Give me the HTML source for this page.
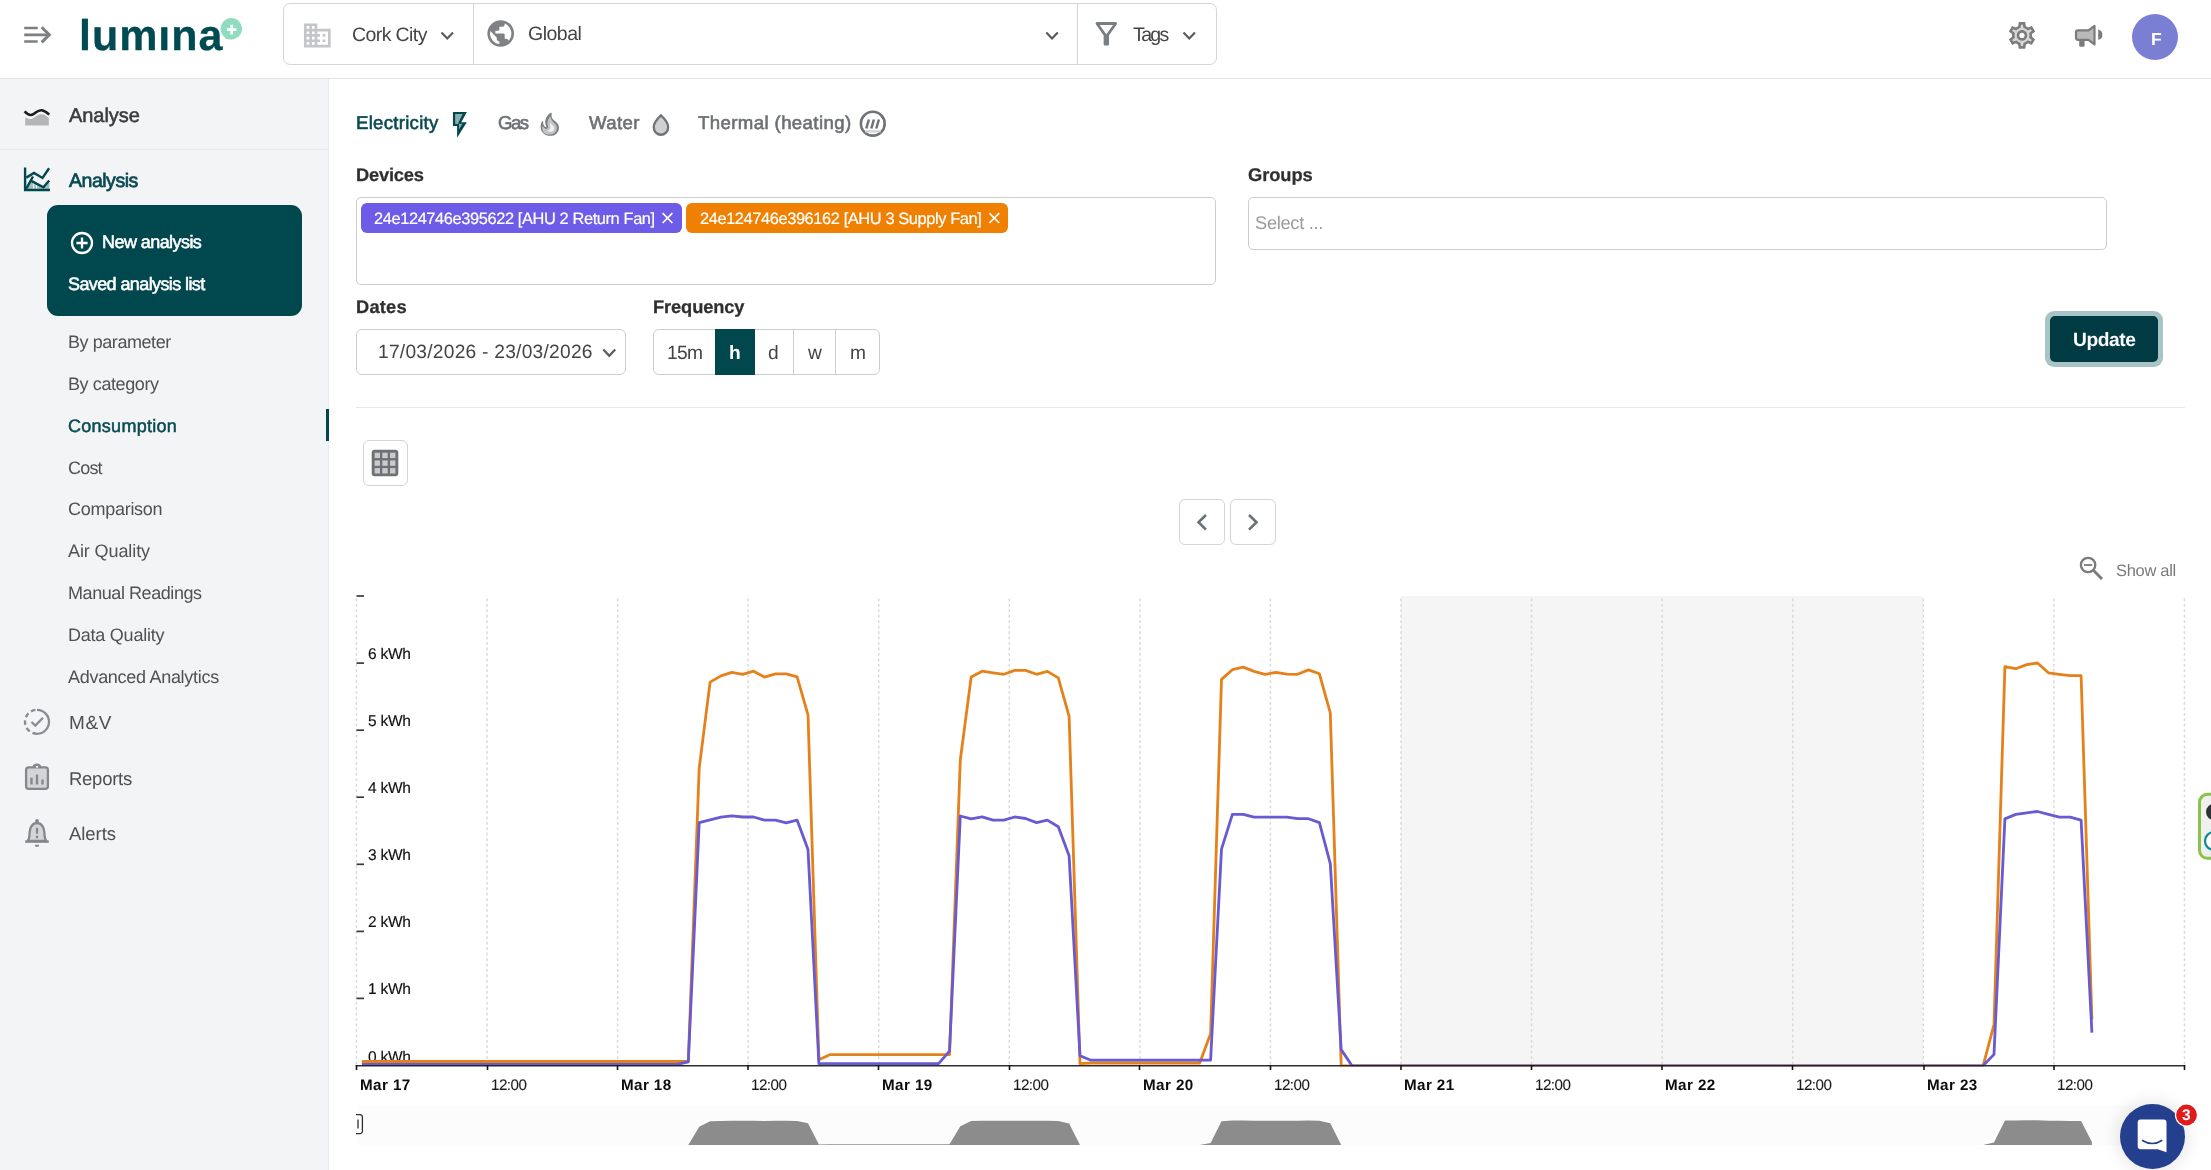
<!DOCTYPE html>
<html lang="en"><head><meta charset="utf-8"><title>lumina - Consumption analysis</title>
<style>
*{box-sizing:border-box;margin:0;padding:0}
html,body{width:2211px;height:1170px;overflow:hidden;background:#fff}
body{position:relative;font-family:"Liberation Sans",Arial,sans-serif;color:#444}
.t{position:absolute;white-space:nowrap;line-height:1;display:block;will-change:transform;text-rendering:geometricPrecision}
.abs{position:absolute}
svg{overflow:visible}
#ov{position:absolute;left:0;top:0;pointer-events:none}
</style></head>
<body>
<div class="hdr" style="position:absolute;left:0px;top:0px;width:2211px;height:79px;background:#fff;border-bottom:1px solid #e3e3e3"></div>
<div style="position:absolute;left:283px;top:3px;width:934px;height:62px;border:1px solid #d5d5d5;border-radius:7px;background:#fff"></div>
<div style="position:absolute;left:473px;top:4px;width:1px;height:60px;background:#d5d5d5"></div>
<div style="position:absolute;left:1077px;top:4px;width:1px;height:60px;background:#d5d5d5"></div>
<div style="position:absolute;left:2132px;top:14px;width:46px;height:46px;border-radius:50%;background:#7b7fd3"></div>
<div style="position:absolute;left:0px;top:79px;width:329px;height:1091px;background:#f3f4f6;border-right:1px solid #e9eaec"></div>
<div style="position:absolute;left:0px;top:149px;width:328px;height:1px;background:#e9eaec"></div>
<div style="position:absolute;left:47px;top:205px;width:255px;height:111px;background:#00474e;border-radius:11px"></div>
<div style="position:absolute;left:326px;top:409px;width:3px;height:32px;background:#00474e"></div>
<div style="position:absolute;left:356px;top:197px;width:860px;height:88px;border:1px solid #cdcdcd;border-radius:5px;background:#fff"></div>
<div style="position:absolute;left:361px;top:203px;width:321px;height:30px;background:#6c5ce7;border-radius:6px"></div>
<div style="position:absolute;left:686px;top:203px;width:322px;height:30px;background:#f08002;border-radius:6px"></div>
<div style="position:absolute;left:1248px;top:197px;width:859px;height:53px;border:1px solid #cdcdcd;border-radius:5px;background:#fff"></div>
<div style="position:absolute;left:356px;top:329px;width:270px;height:46px;border:1px solid #cdcdcd;border-radius:6px;background:#fff"></div>
<div style="position:absolute;left:653px;top:329px;width:227px;height:46px;border:1px solid #cdcdcd;border-radius:6px;background:#fff"></div>
<div style="position:absolute;left:715px;top:329px;width:40px;height:46px;background:#00474e"></div>
<div style="position:absolute;left:793px;top:330px;width:1px;height:44px;background:#cdcdcd"></div>
<div style="position:absolute;left:835px;top:330px;width:1px;height:44px;background:#cdcdcd"></div>
<div style="position:absolute;left:2045px;top:311px;width:118px;height:56px;background:#a8c4c5;border-radius:9px"></div>
<div style="position:absolute;left:2050px;top:316px;width:108px;height:46px;background:#003a42;border-radius:5px"></div>
<div style="position:absolute;left:356px;top:407px;width:1829px;height:1px;background:#e8e8e8"></div>
<div style="position:absolute;left:363px;top:440px;width:45px;height:46px;border:1px solid #d4d4d4;border-radius:6px;background:#fff"></div>
<div style="position:absolute;left:1179px;top:499px;width:46px;height:46px;border:1px solid #d4d4d4;border-radius:6px;background:#fff"></div>
<div style="position:absolute;left:1230px;top:499px;width:46px;height:46px;border:1px solid #d4d4d4;border-radius:6px;background:#fff"></div>
<div style="position:absolute;left:1401.3px;top:596px;width:522.2px;height:469px;background:#f5f5f5"></div>
<div style="position:absolute;left:357px;top:1104.5px;width:1827px;height:40.5px;background:#fcfcfc"></div>
<div style="position:absolute;left:2120px;top:1104px;width:65px;height:65px;border-radius:50%;background:#243f8d;box-shadow:0 0 14px 6px rgba(0,0,0,.07)"></div>
<span class="t logo" style="left:79.3px;top:15px;font-size:43px;color:#004a51;letter-spacing:0.962px;font-weight:700;-webkit-text-stroke:0.3px #004a51;">lumina</span>
<span class="t" style="left:351.6px;top:26px;font-size:19.5px;color:#444;letter-spacing:-0.593px;">Cork City</span>
<span class="t" style="left:528px;top:25px;font-size:19.5px;color:#444;letter-spacing:-0.497px;">Global</span>
<span class="t" style="left:1133px;top:26px;font-size:19.5px;color:#444;letter-spacing:-1.621px;">Tags</span>
<span class="t" style="left:2151.2px;top:31px;font-size:17.5px;color:#fff;font-weight:700;">F</span>
<span class="t" style="left:69px;top:106px;font-size:20px;color:#3b3b3b;letter-spacing:-0.05px;-webkit-text-stroke:0.55px #3b3b3b;">Analyse</span>
<span class="t" style="left:68.6px;top:172px;font-size:19.5px;color:#0a4a52;letter-spacing:-0.479px;-webkit-text-stroke:0.7px #0a4a52;">Analysis</span>
<span class="t" style="left:101.6px;top:233px;font-size:18px;color:#fff;letter-spacing:-0.563px;-webkit-text-stroke:0.55px #fff;">New analysis</span>
<span class="t" style="left:68.3px;top:275px;font-size:18px;color:#fff;letter-spacing:-0.603px;-webkit-text-stroke:0.55px #fff;">Saved analysis list</span>
<span class="t" style="left:68px;top:333px;font-size:18px;color:#515151;letter-spacing:-0.438px;">By parameter</span>
<span class="t" style="left:68px;top:375px;font-size:18px;color:#515151;letter-spacing:-0.404px;">By category</span>
<span class="t" style="left:67.8px;top:417px;font-size:18px;color:#0a4a52;letter-spacing:0.276px;-webkit-text-stroke:0.5px #0a4a52;">Consumption</span>
<span class="t" style="left:68px;top:459px;font-size:18px;color:#515151;letter-spacing:-0.8px;">Cost</span>
<span class="t" style="left:68px;top:500px;font-size:18px;color:#515151;letter-spacing:-0.271px;">Comparison</span>
<span class="t" style="left:68px;top:542px;font-size:18px;color:#515151;letter-spacing:-0.098px;">Air Quality</span>
<span class="t" style="left:68px;top:584px;font-size:18px;color:#515151;letter-spacing:-0.429px;">Manual Readings</span>
<span class="t" style="left:68px;top:626px;font-size:18px;color:#515151;letter-spacing:-0.235px;">Data Quality</span>
<span class="t" style="left:68px;top:668px;font-size:18px;color:#515151;letter-spacing:-0.29px;">Advanced Analytics</span>
<span class="t" style="left:69px;top:714px;font-size:19px;color:#4f4f4f;letter-spacing:0.683px;">M&amp;V</span>
<span class="t" style="left:69px;top:770px;font-size:18.5px;color:#4f4f4f;letter-spacing:-0.267px;">Reports</span>
<span class="t" style="left:69px;top:825px;font-size:18.5px;color:#4f4f4f;letter-spacing:-0.044px;">Alerts</span>
<span class="t" style="left:355.6px;top:114px;font-size:18.6px;color:#0a4a52;letter-spacing:0.279px;-webkit-text-stroke:0.6px #0a4a52;">Electricity</span>
<span class="t" style="left:498.3px;top:114px;font-size:18.6px;color:#6c7075;letter-spacing:-1.54px;-webkit-text-stroke:0.6px #6c7075;">Gas</span>
<span class="t" style="left:588.8px;top:114px;font-size:18.6px;color:#6c7075;letter-spacing:0.39px;-webkit-text-stroke:0.6px #6c7075;">Water</span>
<span class="t" style="left:698.4px;top:114px;font-size:18.6px;color:#6c7075;letter-spacing:0.398px;-webkit-text-stroke:0.6px #6c7075;">Thermal (heating)</span>
<span class="t" style="left:355.8px;top:166px;font-size:18.3px;color:#2f2f2f;letter-spacing:-0.207px;font-weight:700;-webkit-text-stroke:0.25px #2f2f2f;">Devices</span>
<span class="t" style="left:1247.5px;top:166px;font-size:18.3px;color:#2f2f2f;letter-spacing:-0.065px;font-weight:700;-webkit-text-stroke:0.25px #2f2f2f;">Groups</span>
<span class="t" style="left:355.8px;top:298px;font-size:18.3px;color:#2f2f2f;letter-spacing:0.191px;font-weight:700;-webkit-text-stroke:0.25px #2f2f2f;">Dates</span>
<span class="t" style="left:652.5px;top:298px;font-size:18.3px;color:#2f2f2f;letter-spacing:-0.114px;font-weight:700;-webkit-text-stroke:0.25px #2f2f2f;">Frequency</span>
<span class="t" style="left:374.3px;top:211px;font-size:16.4px;color:#fff;letter-spacing:-0.388px;-webkit-text-stroke:0.2px #fff;">24e124746e395622 [AHU 2 Return Fan]</span>
<span class="t" style="left:699.6px;top:211px;font-size:16.4px;color:#fff;letter-spacing:-0.397px;-webkit-text-stroke:0.2px #fff;">24e124746e396162 [AHU 3 Supply Fan]</span>
<span class="t" style="left:1255.2px;top:214px;font-size:18.3px;color:#9b9b9b;letter-spacing:-0.315px;">Select ...</span>
<span class="t" style="left:378.2px;top:343px;font-size:19.2px;color:#444;letter-spacing:0.245px;">17/03/2026 - 23/03/2026</span>
<span class="t" style="left:667px;top:344px;font-size:19.2px;color:#444;letter-spacing:-0.698px;">15m</span>
<span class="t" style="left:729.3px;top:344px;font-size:19.2px;color:#fff;font-weight:700;">h</span>
<span class="t" style="left:767.7px;top:344px;font-size:19.2px;color:#444;">d</span>
<span class="t" style="left:807.5px;top:344px;font-size:19.2px;color:#444;">w</span>
<span class="t" style="left:850px;top:344px;font-size:19.2px;color:#444;">m</span>
<span class="t" style="left:2073.2px;top:331px;font-size:19.2px;color:#fff;letter-spacing:-0.402px;font-weight:700;">Update</span>
<span class="t" style="left:2116.2px;top:563px;font-size:16.5px;color:#7a7a7a;letter-spacing:-0.3px;">Show all</span>
<span class="t" style="left:368.4px;top:1050px;font-size:15.5px;color:#111;letter-spacing:-0.253px;-webkit-text-stroke:0.15px #111;">0 kWh</span>
<span class="t" style="left:368.4px;top:982px;font-size:15.5px;color:#111;letter-spacing:-0.253px;-webkit-text-stroke:0.15px #111;">1 kWh</span>
<span class="t" style="left:368.4px;top:915px;font-size:15.5px;color:#111;letter-spacing:-0.253px;-webkit-text-stroke:0.15px #111;">2 kWh</span>
<span class="t" style="left:368.4px;top:848px;font-size:15.5px;color:#111;letter-spacing:-0.253px;-webkit-text-stroke:0.15px #111;">3 kWh</span>
<span class="t" style="left:368.4px;top:781px;font-size:15.5px;color:#111;letter-spacing:-0.253px;-webkit-text-stroke:0.15px #111;">4 kWh</span>
<span class="t" style="left:368.4px;top:714px;font-size:15.5px;color:#111;letter-spacing:-0.253px;-webkit-text-stroke:0.15px #111;">5 kWh</span>
<span class="t" style="left:368.4px;top:647px;font-size:15.5px;color:#111;letter-spacing:-0.253px;-webkit-text-stroke:0.15px #111;">6 kWh</span>
<span class="t" style="left:359.5px;top:1078px;font-size:15.2px;color:#0c0c0c;letter-spacing:0.44px;font-weight:700;">Mar 17</span>
<span class="t" style="left:490.9px;top:1078px;font-size:15.2px;color:#1a1a1a;letter-spacing:-0.542px;-webkit-text-stroke:0.1px #1a1a1a;">12:00</span>
<span class="t" style="left:620.5px;top:1078px;font-size:15.2px;color:#0c0c0c;letter-spacing:0.41px;font-weight:700;">Mar 18</span>
<span class="t" style="left:751.4px;top:1078px;font-size:15.2px;color:#1a1a1a;letter-spacing:-0.542px;-webkit-text-stroke:0.1px #1a1a1a;">12:00</span>
<span class="t" style="left:881.5px;top:1078px;font-size:15.2px;color:#0c0c0c;letter-spacing:0.425px;font-weight:700;">Mar 19</span>
<span class="t" style="left:1012.9px;top:1078px;font-size:15.2px;color:#1a1a1a;letter-spacing:-0.542px;-webkit-text-stroke:0.1px #1a1a1a;">12:00</span>
<span class="t" style="left:1142.5px;top:1078px;font-size:15.2px;color:#0c0c0c;letter-spacing:0.44px;font-weight:700;">Mar 20</span>
<span class="t" style="left:1273.9px;top:1078px;font-size:15.2px;color:#1a1a1a;letter-spacing:-0.542px;-webkit-text-stroke:0.1px #1a1a1a;">12:00</span>
<span class="t" style="left:1404px;top:1078px;font-size:15.2px;color:#0c0c0c;letter-spacing:0.394px;font-weight:700;">Mar 21</span>
<span class="t" style="left:1534.9px;top:1078px;font-size:15.2px;color:#1a1a1a;letter-spacing:-0.542px;-webkit-text-stroke:0.1px #1a1a1a;">12:00</span>
<span class="t" style="left:1665px;top:1078px;font-size:15.2px;color:#0c0c0c;letter-spacing:0.44px;font-weight:700;">Mar 22</span>
<span class="t" style="left:1795.9px;top:1078px;font-size:15.2px;color:#1a1a1a;letter-spacing:-0.542px;-webkit-text-stroke:0.1px #1a1a1a;">12:00</span>
<span class="t" style="left:1927px;top:1078px;font-size:15.2px;color:#0c0c0c;letter-spacing:0.425px;font-weight:700;">Mar 23</span>
<span class="t" style="left:2057.4px;top:1078px;font-size:15.2px;color:#1a1a1a;letter-spacing:-0.542px;-webkit-text-stroke:0.1px #1a1a1a;">12:00</span>
<span class="t" style="left:2182.3px;top:1108px;font-size:15.5px;color:#fff;font-weight:700;z-index:5;">3</span>
<svg id="ov" width="2211" height="1170" viewBox="0 0 2211 1170">
<g stroke="#7d7f83" stroke-width="2.7" fill="none"><path d="M24.2 28H37.7M24.2 34.8H49M24.2 41.5H37.7"/><path d="M41.7 27.2L49.3 34.8L41.7 42.4" stroke-width="3" stroke-linejoin="miter"/></g>
<rect x="159.8" y="16.5" width="10.4" height="8.7" fill="#fff"/>
<path d="M224 34.5L225.7 39L232 39.3z" fill="#8fdcc0"/><circle cx="231.3" cy="28.7" r="10.7" fill="#8fdcc0"/><path d="M226.9 29.6h9.6M231.7 24.8v9.6" stroke="#fff" stroke-width="2.7" fill="none"/>
<g transform="translate(301.3,19.4) scale(1.3333)" fill="#c3c5c8"><path d="M12 7V3H2v18h20V7H12zM6 19H4v-2h2v2zm0-4H4v-2h2v2zm0-4H4V9h2v2zm0-4H4V5h2v2zm4 12H8v-2h2v2zm0-4H8v-2h2v2zm0-4H8V9h2v2zm0-4H8V5h2v2zm10 12h-8v-2h2v-2h-2v-2h2v-2h-2V9h8v10zm-2-8h-2v2h2v-2zm0 4h-2v2h2v-2z"/></g>
<g transform="translate(484.7,17.5) scale(1.3333)" fill="#7f8185"><path d="M12 2C6.48 2 2 6.48 2 12s4.48 10 10 10 10-4.48 10-10S17.52 2 12 2zm-1 17.93c-3.95-.49-7-3.85-7-7.93 0-.62.08-1.21.21-1.79L9 15v1c0 1.1.9 2 2 2v1.93zm6.9-2.54c-.26-.81-1-1.39-1.9-1.39h-1v-3c0-.55-.45-1-1-1H8v-2h2c.55 0 1-.45 1-1V7h2c1.1 0 2-.9 2-2v-.41c2.93 1.19 5 4.06 5 7.41 0 2.08-.8 3.97-2.1 5.39z"/></g>
<g transform="translate(1090.2,16.2) scale(1.345,1.47)" fill="#7a7d81"><path d="M7 6h10l-5.01 6.3L7 6zm-2.75-.39C6.27 8.2 10 13 10 13v6c0 .55.45 1 1 1h2c.55 0 1-.45 1-1v-6s3.72-4.8 5.74-7.39c.51-.66.04-1.61-.79-1.61H5.04c-.83 0-1.3.95-.79 1.61z"/></g>
<path d="M441.5 32.6L447.25 38.4L453 32.6" stroke="#5a5a5a" stroke-width="2.2" fill="none"/>
<path d="M1046.3 32.6L1052.05 38.4L1057.8 32.6" stroke="#5a5a5a" stroke-width="2.2" fill="none"/>
<path d="M1183.5 32.6L1189.25 38.4L1195 32.6" stroke="#5a5a5a" stroke-width="2.2" fill="none"/>
<g transform="translate(2006,19.4) scale(1.3333)" fill="#7c7c7c"><path opacity=".3" d="M19.28 8.6l-.7-1.21-1.27.51-1.06.43-.91-.7c-.39-.3-.8-.54-1.23-.71l-1.06-.43-.16-1.13L12.7 4h-1.4l-.19 1.35-.16 1.13-1.06.44c-.41.17-.82.41-1.25.73l-.9.68-1.05-.42-1.27-.52-.7 1.21 1.08.84.89.7-.14 1.13c-.03.3-.05.53-.05.73s.02.43.05.73l.14 1.13-.89.7-1.08.84.7 1.21 1.27-.51 1.06-.43.91.7c.39.3.8.54 1.23.71l1.06.43.16 1.13.19 1.36h1.39l.19-1.35.16-1.13 1.06-.43c.41-.17.82-.41 1.25-.73l.9-.68 1.04.42 1.27.51.7-1.21-1.08-.84-.89-.7.14-1.13c.04-.31.05-.52.05-.73 0-.21-.02-.43-.05-.73l-.14-1.13.89-.7 1.1-.84zM12 16c-2.21 0-4-1.79-4-4s1.79-4 4-4 4 1.79 4 4-1.79 4-4 4z"/><path d="M19.43 12.98c.04-.32.07-.64.07-.98 0-.34-.03-.66-.07-.98l2.11-1.65c.19-.15.24-.42.12-.64l-2-3.46c-.09-.16-.26-.25-.44-.25-.06 0-.12.01-.17.03l-2.49 1c-.52-.4-1.08-.73-1.69-.98l-.38-2.65C14.46 2.18 14.25 2 14 2h-4c-.25 0-.46.18-.49.42l-.38 2.65c-.61.25-1.17.59-1.69.98l-2.49-1c-.06-.02-.12-.03-.18-.03-.17 0-.34.09-.43.25l-2 3.46c-.13.22-.07.49.12.64l2.11 1.65c-.04.32-.07.65-.07.98 0 .33.03.66.07.98l-2.11 1.65c-.19.15-.24.42-.12.64l2 3.46c.09.16.26.25.44.25.06 0 .12-.01.17-.03l2.49-1c.52.4 1.08.73 1.69.98l.38 2.65c.03.24.24.42.49.42h4c.25 0 .46-.18.49-.42l.38-2.65c.61-.25 1.17-.59 1.69-.98l2.49 1c.06.02.12.03.18.03.17 0 .34-.09.43-.25l2-3.46c.12-.22.07-.49-.12-.64l-2.11-1.65zm-1.98-1.71c.04.31.05.52.05.73 0 .21-.02.43-.05.73l-.14 1.13.89.7 1.08.84-.7 1.21-1.27-.51-1.04-.42-.9.68c-.43.32-.84.56-1.25.73l-1.06.43-.16 1.13-.2 1.35h-1.4l-.19-1.35-.16-1.13-1.06-.43c-.43-.18-.83-.41-1.23-.71l-.91-.7-1.06.43-1.27.51-.7-1.21 1.08-.84.89-.7-.14-1.13c-.03-.31-.05-.54-.05-.74s.02-.43.05-.73l.14-1.13-.89-.7-1.08-.84.7-1.21 1.27.51 1.04.42.9-.68c.43-.32.84-.56 1.25-.73l1.06-.43.16-1.13.2-1.35h1.39l.19 1.35.16 1.13 1.06.43c.43.18.83.41 1.23.71l.91.7 1.06-.43 1.27-.51.7 1.21-1.07.85-.89.7.14 1.13zM12 8c-2.21 0-4 1.79-4 4s1.79 4 4 4 4-1.79 4-4-1.79-4-4-4zm0 6c-1.1 0-2-.9-2-2s.9-2 2-2 2 .9 2 2-.9 2-2 2z"/></g>
<g stroke="#7b7b7b" stroke-width="2.2" stroke-linejoin="round" fill="#b9b9b9"><path d="M2078 30.4h10.5l6-4.6v18.6l-6-4.6H2078a2 2 0 0 1-2-2v-5.4a2 2 0 0 1 2-2z"/><path d="M2080.3 40.5h3.2v5.2h-3.2z" fill="#7b7b7b"/></g><path d="M2098.2 29.6a5.2 5.2 0 0 1 0 10.2z" fill="#7b7b7b"/>
<path d="M25.2 117.4c2.5 1.3 5.6 2.6 8.6 .3 3-2.3 5.3-4 8.6-3.4 2.6 .5 4.6 2 6.4 3.6V125.6H25.2z" fill="#b3b5b7"/><path d="M24.6 111.4c2.4 2.6 5.4 4.6 8.4 3 3-1.6 5-4.6 8.6-4.2 3 .3 5.4 2.2 7.6 4.4" stroke="#1c1c1c" stroke-width="2.5" fill="none"/>
<path d="M27 189L31.6 181L43.4 187.3L49.3 181.5V189z" fill="#00474e" opacity=".32"/><path d="M33.6 182.5V189M36.6 184V189" stroke="#f3f4f6" stroke-width="1.1" fill="none"/><g stroke="#00474e" stroke-width="2.4" fill="none"><path d="M25.1 167.4V190H50"/><path d="M26.3 177.6L34 173L42.5 178L49.1 168.3"/><path d="M26.3 188.6L33 176.5M30.8 180.6L43.4 187.3L49.2 180.5"/></g>
<g stroke="#fff" stroke-width="2.3" fill="none"><circle cx="82" cy="243" r="10"/><path d="M76.4 243h11.2M82 237.4v11.2"/></g>
<g stroke="#8a8c8f" stroke-width="2.3" fill="none"><path d="M37 709.8a12 12 0 0 1 0 24"/><path d="M37 733.8a12 12 0 0 1 0-24" stroke-dasharray="4.6 3.2"/><path d="M31.5 722L35.3 725.6L43 717.8" stroke-width="2.3"/></g>
<g><rect x="26.1" y="767.3" width="21.8" height="21.6" rx="2.6" fill="#d3d5d7" stroke="#85888b" stroke-width="2.3"/><path d="M33.5 767a3.5 2.6 0 0 1 7 0" fill="#85888b" stroke="#85888b" stroke-width="1.8"/><circle cx="37" cy="766.8" r="1.1" fill="#f3f4f6"/><path d="M31.5 784.5v-6.8M37 784.5v-10M42.5 784.5v-5" stroke="#85888b" stroke-width="2.4" fill="none"/></g>
<g><path d="M27.6 840.8c1.6-1.4 2-3.4 2-8.2a7.4 9.6 0 0 1 14.8 0c0 4.8.400 6.8 2 8.2z" fill="#d3d5d7" stroke="#85888b" stroke-width="2.3" stroke-linejoin="round"/><path d="M25.2 841.6h23.6" stroke="#85888b" stroke-width="2.5"/><circle cx="37" cy="820.8" r="1.9" fill="#85888b"/><path d="M34.8 844.7h4.4a2.2 2.2 0 0 1-4.4 0z" fill="#85888b"/><path d="M37 827.8v6M37 835.8v2.4" stroke="#85888b" stroke-width="2.2"/></g>
<g transform="translate(443.2,109.4) scale(1.39,1.285)"><path d="M7 2v11h3v9l7-12h-4l4-8z" fill="#00474e"/><path d="M8.6 3.6h5.4l-3.4 7.6h3.2l-2.4 4.4v-4.2h-2.8z" fill="#fff" opacity=".55"/></g>
<g transform="translate(536,111) scale(1.15,1.13)"><path d="M19.48 12.35c-1.57-4.08-7.16-4.3-5.81-10.23.1-.44-.37-.78-.75-.55C9.29 3.71 6.68 8 8.87 13.62c.18.46-.36.89-.75.59-1.81-1.37-2-3.34-1.84-4.75.06-.52-.62-.77-.91-.34C4.69 10.16 4 11.84 4 14.37c.38 5.6 5.11 7.32 6.81 7.54 2.43.31 5.06-.14 6.95-1.87 2.08-1.93 2.84-5.01 1.72-7.69z" fill="#7b7e82"/><path d="M12.6 4.8c-2.3 2.3-3.4 5.3-2.2 8.8.6 1.6-1.3 3-2.7 1.9-.9-.7-1.5-1.5-1.9-2.4-.3.9-.4 1.9-.3 3 .4 3.7 3.4 4.6 5.6 4.7 2.3.1 4.3-.6 5.5-1.8 1.5-1.5 2-3.8 1.2-5.9-.9-2.4-4.6-3.7-5.2-8.3z" fill="#c2c4c7"/><path d="M10.2 17.38c1.44-.35 2.18-1.39 2.38-2.31.33-1.43-.96-2.83-.09-5.09.33 1.87 3.27 3.04 3.27 5.08.08 2.53-2.66 4.7-5.56 2.32z" fill="#f2f2f3"/></g>
<g transform="translate(648.6,111.8) scale(1.03,1.095)"><path d="M12 3.2c-4.7 4.1-7 7.6-7 10.6 0 4.3 3.3 7.2 7 7.2s7-2.9 7-7.2c0-3-2.3-6.5-7-10.6z" fill="#cfd1d3" stroke="#6f7377" stroke-width="2.2"/></g>
<g stroke="#6f7377" fill="none"><circle cx="872.8" cy="123.7" r="11.9" stroke-width="2.6"/><path d="M866.3 128.5l2.6-9M871.3 128.5l2.6-9M876.3 128.5l2.6-9" stroke-width="2.5"/><path d="M865 131.4h15.6" stroke="#cfd1d3" stroke-width="2.2"/></g>
<path d="M662.6 213.2l9.8 9.8M672.4 213.2l-9.8 9.8M989.4 213.2l9.8 9.8M999.2 213.2l-9.8 9.8" stroke="#fff" stroke-width="1.7" fill="none"/>
<path d="M603.3 349.5L609.25 355.8L615.2 349.5" stroke="#5f5f5f" stroke-width="2.3" fill="none"/>
<rect x="371.7" y="449.7" width="26.6" height="26.6" rx="3.2" fill="#6d7074"/><rect x="374.6" y="452.7" width="5.4" height="5.4" fill="#c8cacc"/><rect x="374.6" y="460.4" width="5.4" height="5.4" fill="#c8cacc"/><rect x="374.6" y="468.1" width="5.4" height="5.4" fill="#c8cacc"/><rect x="382.3" y="452.7" width="5.4" height="5.4" fill="#c8cacc"/><rect x="382.3" y="460.4" width="5.4" height="5.4" fill="#c8cacc"/><rect x="382.3" y="468.1" width="5.4" height="5.4" fill="#c8cacc"/><rect x="390" y="452.7" width="5.4" height="5.4" fill="#c8cacc"/><rect x="390" y="460.4" width="5.4" height="5.4" fill="#c8cacc"/><rect x="390" y="468.1" width="5.4" height="5.4" fill="#c8cacc"/>
<g stroke="#6b7076" stroke-width="2.6" fill="none"><path d="M1206 515L1198.5 522.3L1206 529.6"/><path d="M1249 515L1256.5 522.3L1249 529.6"/></g>
<g stroke="#7a7a7a" fill="none"><circle cx="2088.1" cy="565" r="7.2" stroke-width="2.3"/><path d="M2084 565h8.2" stroke-width="1.8"/><path d="M2093.6 570.6L2102 579" stroke-width="2.8"/></g>
<g stroke="#d9d9d9" stroke-width="1.5" stroke-dasharray="2.7 2.75" fill="none"><path d="M356.45 598.5V1065"/><path d="M487.02 598.5V1065"/><path d="M617.59 598.5V1065"/><path d="M748.16 598.5V1065"/><path d="M878.73 598.5V1065"/><path d="M1009.3 598.5V1065"/><path d="M1139.87 598.5V1065"/><path d="M1270.44 598.5V1065"/><path d="M1401.01 598.5V1065"/><path d="M1531.58 598.5V1065"/><path d="M1662.15 598.5V1065"/><path d="M1792.72 598.5V1065"/><path d="M1923.29 598.5V1065"/><path d="M2053.86 598.5V1065"/><path d="M2184.43 598.5V1065"/></g>
<g stroke="#3a3a3a" stroke-width="1.7" fill="none"><path d="M356.5 998.4H364"/><path d="M356.5 931.4H364"/><path d="M356.5 864.3H364"/><path d="M356.5 797.2H364"/><path d="M356.5 730.2H364"/><path d="M356.5 663.1H364"/><path d="M356.5 596H364"/></g>
<clipPath id="plot"><rect x="350" y="590" width="1840" height="476.3"/></clipPath>
<polyline clip-path="url(#plot)" points="361.9,1061.5 688.3,1061.5 699.2,768.2 710.1,682.1 721,675.9 731.8,672.4 742.7,674.3 753.6,671.2 764.5,677.1 775.4,673.8 786.2,673.8 797.1,676.9 808,714.9 818.9,1059.7 829.8,1054.7 949.5,1054.7 960.3,760 971.2,676.9 982.1,671.2 993,672.8 1003.9,674.3 1014.7,670.4 1025.6,670.4 1036.5,674.3 1047.4,671.4 1058.3,677.9 1069.1,716.3 1080,1063.7 1090.9,1063 1199.7,1063 1210.6,1033.8 1221.5,679.4 1232.4,669.7 1243.2,667.1 1254.1,671.4 1265,674.3 1275.9,672.4 1286.8,674.1 1297.6,674.3 1308.5,669.9 1319.4,673.8 1330.3,712.8 1341.2,1065.8 1983.1,1065.8 1994,1024.7 2004.9,666.7 2015.8,668.7 2026.7,664.6 2037.5,663 2048.4,672.8 2059.3,674.3 2070.2,675.7 2081.1,675.7 2091.9,1019.6" fill="none" stroke="#e5811a" stroke-width="2.8" stroke-linejoin="round"/>
<polyline clip-path="url(#plot)" points="361.9,1064.3 677.4,1064.3 688.3,1061.8 699.2,822.6 710.1,819.9 721,817.2 731.8,815.8 742.7,817 753.6,817 764.5,820.1 775.4,820.1 786.2,822.8 797.1,820.1 808,849.6 818.9,1063.7 938.6,1063.7 949.5,1051.2 960.3,816 971.2,818.9 982.1,816.8 993,820.1 1003.9,820.1 1014.7,817 1025.6,818.5 1036.5,822.6 1047.4,820.1 1058.3,826.7 1069.1,855.8 1080,1055.7 1090.9,1060.2 1210.6,1060.2 1221.5,849.2 1232.4,814.4 1243.2,814.4 1254.1,817.2 1286.8,817.2 1297.6,818.7 1308.5,818.7 1319.4,822.6 1330.3,863.6 1341.2,1049.6 1352,1065.8 1983.1,1065.8 1994,1054.4 2004.9,818.9 2015.8,814.4 2026.7,812.9 2037.5,811.5 2048.4,814.4 2059.3,817.2 2070.2,817.2 2081.1,820.1 2091.9,1032.6" fill="none" stroke="#675ad2" stroke-width="2.8" stroke-linejoin="round"/>
<path d="M355.8 1065.7H2185.2" stroke="#1c1c1c" stroke-width="1.6" fill="none" opacity=".92"/>
<g stroke="#141414" stroke-width="1.6" fill="none"><path d="M356.5 1065V1070"/><path d="M487.5 1065V1070"/><path d="M617.5 1065V1070"/><path d="M748 1065V1070"/><path d="M878.5 1065V1070"/><path d="M1009.5 1065V1070"/><path d="M1139.5 1065V1070"/><path d="M1270.5 1065V1070"/><path d="M1401 1065V1070"/><path d="M1531.5 1065V1070"/><path d="M1662 1065V1070"/><path d="M1792.5 1065V1070"/><path d="M1924 1065V1070"/><path d="M2054 1065V1070"/><path d="M2184.5 1065V1070"/></g>
<polygon points="361.9,1144.9 361.9,1144.9 688.3,1144.9 699.2,1126.64 710.1,1121.35 721,1120.97 731.8,1120.75 742.7,1120.87 753.6,1120.68 764.5,1121.04 775.4,1120.84 786.2,1120.84 797.1,1121.03 808,1123.36 818.9,1144.54 829.8,1144.24 949.5,1144.24 960.3,1126.13 971.2,1121.03 982.1,1120.68 993,1120.78 1003.9,1120.87 1014.7,1120.63 1025.6,1120.63 1036.5,1120.87 1047.4,1120.69 1058.3,1121.09 1069.1,1123.45 1080,1144.9 1090.9,1144.9 1199.7,1144.9 1210.6,1142.95 1221.5,1121.18 1232.4,1120.59 1243.2,1120.43 1254.1,1120.69 1265,1120.87 1275.9,1120.75 1286.8,1120.86 1297.6,1120.87 1308.5,1120.6 1319.4,1120.84 1330.3,1123.23 1341.2,1144.9 1983.1,1144.9 1994,1142.39 2004.9,1120.4 2015.8,1120.53 2026.7,1120.27 2037.5,1120.18 2048.4,1120.78 2059.3,1120.87 2070.2,1120.96 2081.1,1120.96 2091.9,1142.08 2091.9,1144.9" fill="#8c8c8c"/>
<path d="M356 1114.6H360a2.4 2.4 0 0 1 2.4 2.4V1131.2a2.4 2.4 0 0 1 -2.4 2.4H356" fill="#fff" stroke="#2f2f2f" stroke-width="1.3"/><path d="M358 1119.5v9" stroke="#2f2f2f" stroke-width="1.3"/>
<rect x="2199.5" y="794.3" width="30" height="64" rx="8" fill="#f0f0f0" stroke="#8bc34a" stroke-width="3"/><circle cx="2214.5" cy="812" r="8.5" fill="#2e3237"/><circle cx="2214" cy="841" r="9" fill="#fff" stroke="#0e8a94" stroke-width="2.2"/>
<path d="M2140.7 1119.6h22.8a3 3 0 0 1 3 3v29.7l-8.8-3.1h-17a3 3 0 0 1-3-3v-23.6a3 3 0 0 1 3-3z" fill="#fff"/><path d="M2142.5 1140.5q9.8 6.2 19.3 0" stroke="#243f8d" stroke-width="1.5" fill="none" stroke-linecap="round"/>
<circle cx="2186.5" cy="1115" r="11.6" fill="#fff"/><circle cx="2186.5" cy="1115" r="10.4" fill="#e01b1b"/>
</svg>
</body></html>
